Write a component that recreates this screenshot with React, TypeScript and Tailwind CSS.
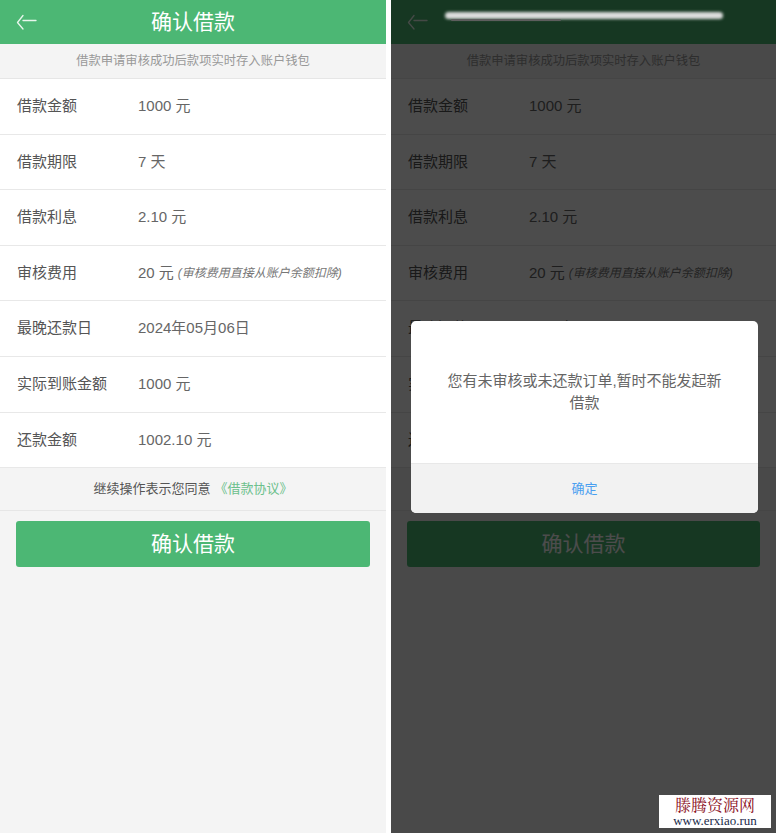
import React from "react";

const rows: { label: string; value: string; note?: string }[] = [
  { label: "借款金额", value: "1000 元" },
  { label: "借款期限", value: "7 天" },
  { label: "借款利息", value: "2.10 元" },
  { label: "审核费用", value: "20 元", note: "(审核费用直接从账户余额扣除)" },
  { label: "最晚还款日", value: "2024年05月06日" },
  { label: "实际到账金额", value: "1000 元" },
  { label: "还款金额", value: "1002.10 元" },
];

const BackArrow = () => (
  <svg width="22" height="16" viewBox="0 0 22 16" fill="none" stroke="#e8f6ec" strokeWidth="1.3" strokeLinecap="round" strokeLinejoin="round">
    <polyline points="7,1.5 1.5,8.5 7,15" />
    <line x1="7" y1="6.5" x2="20" y2="6.5" />
  </svg>
);

const LoanScreen = ({ showTitle = true }: { showTitle?: boolean }) => (
  <div className="flex h-full flex-col bg-[#f4f4f4]">
    {/* header */}
    <div className="relative flex h-[44px] shrink-0 items-center justify-center bg-[#4cb774]">
      <div className="absolute left-[16px] top-[14px]">
        <BackArrow />
      </div>
      {showTitle && <h1 className="text-[21px] font-normal text-white">确认借款</h1>}
    </div>

    <div className="flex h-[35px] shrink-0 items-center justify-center border-b border-[#e6e6e6] text-[12.3px] text-[#999]">
      借款申请审核成功后款项实时存入账户钱包
    </div>

    <div className="bg-white">
      {rows.map((r) => (
        <div key={r.label} className="flex h-[55.6px] items-center border-b border-[#e8e8e8] text-[15px]">
          <span className="w-[138px] shrink-0 pl-[17px] text-[#555]">{r.label}</span>
          <span className="text-[#666]">{r.value}</span>
          {r.note && <span className="ml-[4px] text-[12px] italic text-[#777]">{r.note}</span>}
        </div>
      ))}
    </div>

    <div className="flex h-[43px] shrink-0 items-center justify-center border-b border-[#e6e6e6] text-[13px] text-[#555]">
      继续操作表示您同意
      <span className="ml-[4px] text-[#6cc08c]">《借款协议》</span>
    </div>

    <button className="mx-[16px] mt-[10px] flex h-[46px] items-center justify-center rounded-[3px] bg-[#4cb774] text-[21px] font-normal text-white">
      确认借款
    </button>
  </div>
);

export default function App() {
  return (
    <div
      className="relative flex h-[833px] w-[776px] overflow-hidden bg-white"
      style={{ fontFamily: '"Liberation Sans", "Noto Sans CJK SC", sans-serif' }}
    >
      <div className="h-full w-[386px] shrink-0">
        <LoanScreen />
      </div>

      <div className="relative ml-[5px] h-full w-[385px] shrink-0 overflow-hidden">
        <LoanScreen showTitle={false} />
        <div className="absolute inset-0 bg-black/70" />

        {/* scribbled-out title */}
        <div className="absolute left-[54px] top-[12px] h-[7px] w-[278px] rounded-full bg-[#dcdcdc] blur-[1.5px]" />
        <div className="absolute left-[60px] top-[19px] h-[2px] w-[110px] rounded-full bg-[#5e5e5e] blur-[0.5px]" />

        {/* dialog */}
        <div className="absolute left-[20px] top-[321px] w-[347px] overflow-hidden rounded-[5px] bg-white">
          <div className="flex h-[142px] items-center justify-center px-[20px] text-center text-[15px] leading-[22px] text-[#666]">
            <p>
              您有未审核或未还款订单,暂时不能发起新
              <br />
              借款
            </p>
          </div>
          <div className="flex h-[50px] items-center justify-center border-t border-[#e8e8e8] bg-[#f2f2f2] text-[13px] text-[#4a9ff0]">
            确定
          </div>
        </div>

        {/* watermark */}
        <div className="absolute left-[268px] top-[795px] flex h-[33px] w-[112px] flex-col items-center justify-center bg-white leading-none">
          <span className="text-[16px] text-[#8a0f24]" style={{ fontFamily: '"Noto Serif CJK SC", "Noto Sans CJK SC", serif' }}>
            滕腾资源网
          </span>
          <span className="mt-[1px] text-[13px] text-[#1a2a4a]" style={{ fontFamily: '"Liberation Serif", serif' }}>
            www.erxiao.run
          </span>
        </div>
      </div>
    </div>
  );
}
